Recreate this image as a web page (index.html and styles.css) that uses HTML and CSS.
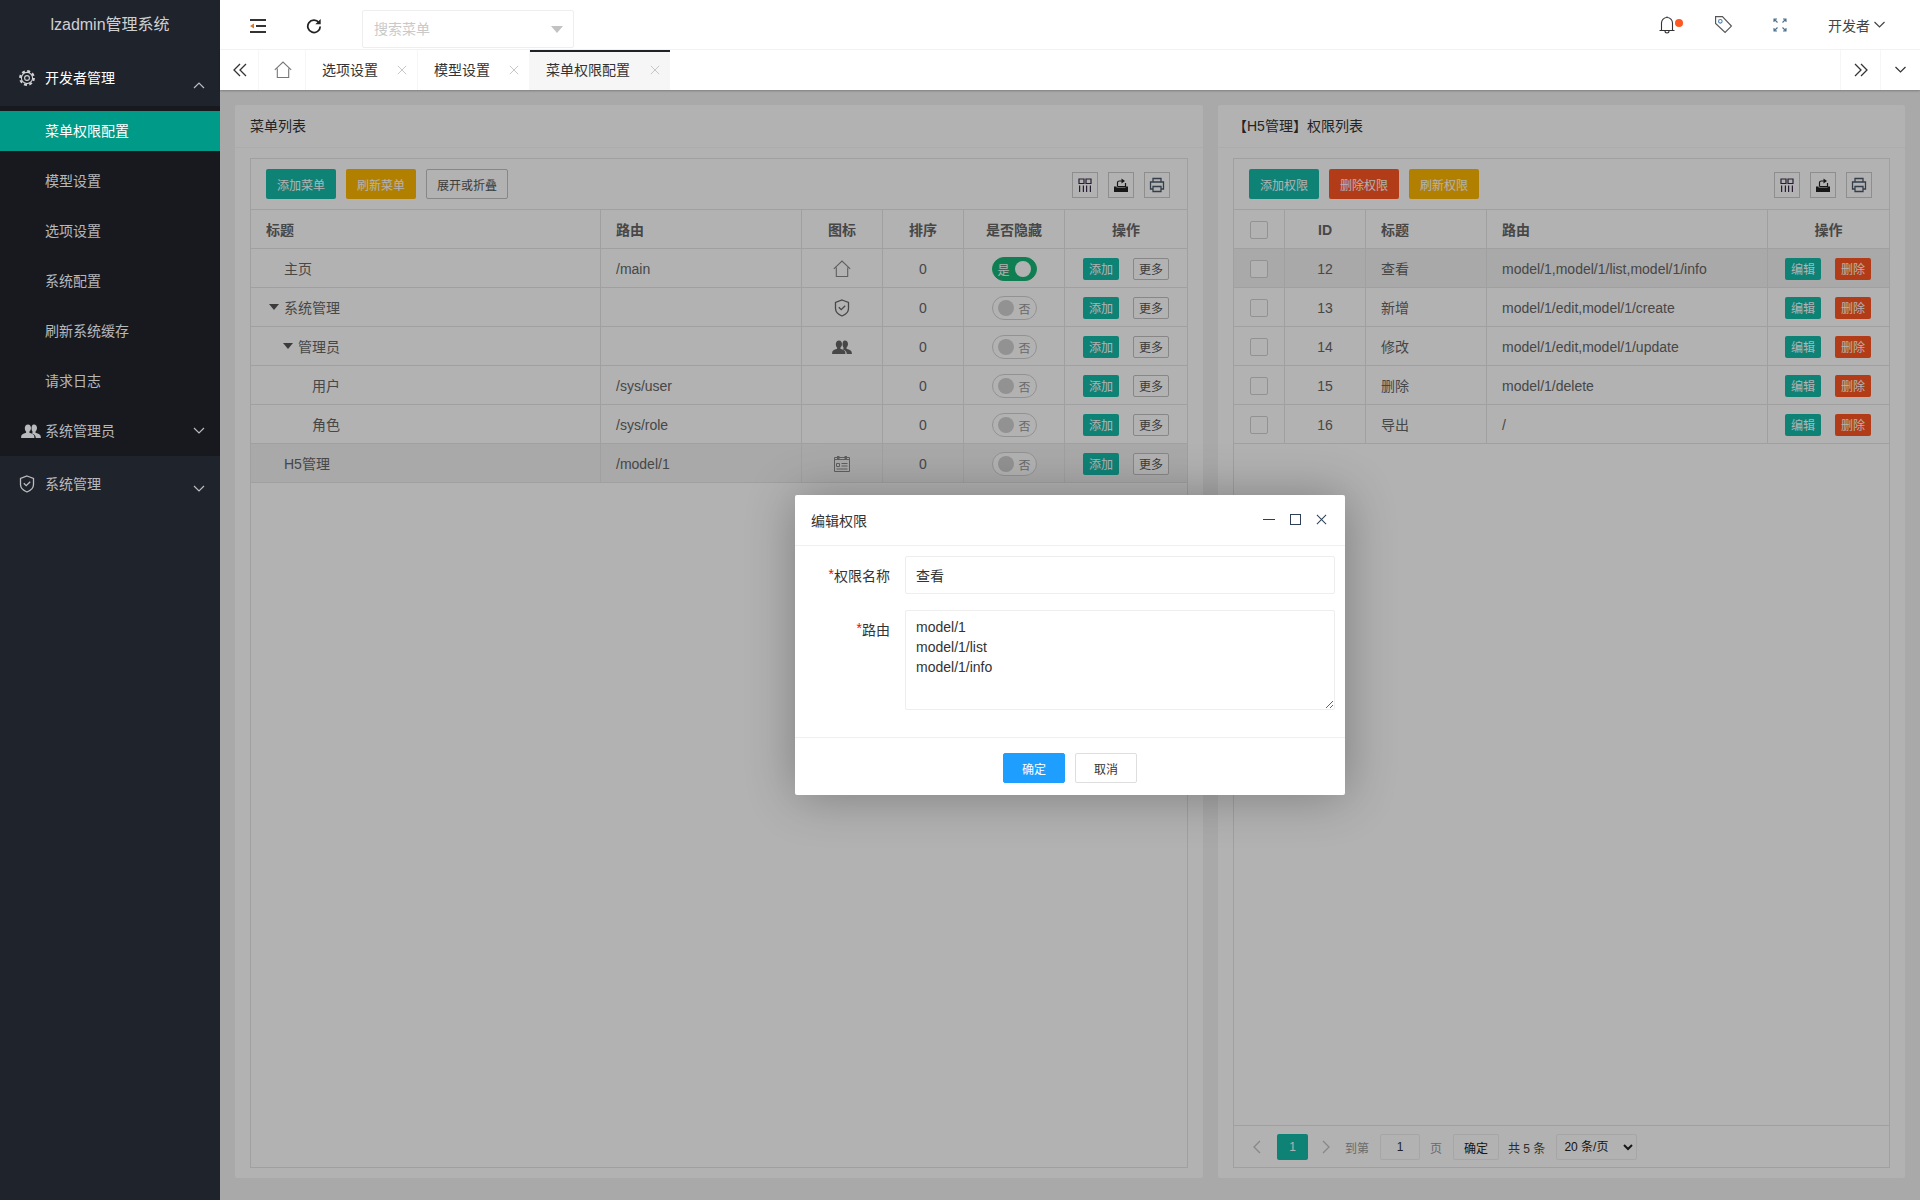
FILE: index.html
```html
<!DOCTYPE html>
<html>
<head>
  <meta charset="utf-8">
  <title>lzadmin管理系统</title>
  <link rel="stylesheet" href="styles.css">
</head>
<body>
  <svg class="sprite" xmlns="http://www.w3.org/2000/svg">
    <symbol id="i-gear" viewBox="0 0 18 18">
      <circle cx="9" cy="9" r="2.4" fill="none" stroke="currentColor" stroke-width="1.100"/>
      <circle cx="9" cy="9" r="5.600" fill="none" stroke="currentColor" stroke-width="1.100"/>
      <circle cx="9" cy="9" r="6.900" fill="none" stroke="currentColor" stroke-width="2" stroke-dasharray="3 2.420"/>
    </symbol>
    <symbol id="i-users" viewBox="0 0 20 16">
      <path fill="currentColor" d="M7 1.500c1.900 0 3 1.600 3 3.500 0 1.500-.7 2.900-1.600 3.500v1.200c1.800.6 4 1.500 4.600 2.600.3.600.4 1.700.4 2.700H.1c0-1 .1-2.100.4-2.700.6-1.100 2.800-2 4.600-2.600V8.500C4.200 7.900 3.800 6.500 3.800 5c0-1.900 1.300-3.500 3.200-3.500z"/>
      <path fill="currentColor" d="M13 1.500c1.900 0 3 1.600 3 3.500 0 1.500-.7 2.900-1.500 3.500v1.200c1.800.6 4.200 1.500 4.800 2.600.3.600.6 1.700.6 2.700h-5.100c0-1.800-.8-3.200-4.100-4.700.4-.3.800-.5.800-.9V8.500c-.6-.6-1-2-1-3.500 0-1.900 1.100-3.500 2-3.500z"/>
    </symbol>
    <symbol id="i-shield" viewBox="0 0 16 18">
      <path fill="none" stroke="currentColor" stroke-width="1.300" d="M8 1l6.500 2.400v6.200c0 3.400-3 6-6.500 7.400-3.500-1.400-6.500-4-6.500-7.400V3.400z"/>
      <path fill="none" stroke="currentColor" stroke-width="1.300" d="M4.800 8.300l2.400 2.400 4-4"/>
    </symbol>
    <symbol id="i-home" viewBox="0 0 18 18">
      <path fill="none" stroke="currentColor" stroke-width="1.100" d="M.8 8.800L9 1l8.200 7.800M3.300 7.500v9h11.400v-9"/>
    </symbol>
    <symbol id="i-cal" viewBox="0 0 18 18">
      <path fill="none" stroke="currentColor" d="M1.500 2.500h15v14h-15z"/>
      <path fill="currentColor" d="M4 1h2.500v3H4zM11.500 1H14v3h-2.500zM1.500 4h15v1h-15z"/>
      <path fill="none" stroke="currentColor" d="M3.500 8.500h3v3h-3zM8.500 8.500h6M8.500 11h6M3.500 14h11"/>
    </symbol>
    <symbol id="i-cols" viewBox="0 0 16 16">
      <path fill="none" stroke="currentColor" stroke-width="1.200" d="M2 2h5v4.500H2zM9 2h5v4.500H9zM2.600 8.500V15M6.400 8.500V15M9.600 8.500V15M13.400 8.500V15"/>
    </symbol>
    <symbol id="i-export" viewBox="0 0 16 16">
      <path fill="currentColor" d="M1 9.500h2.500v1h9v-1H15v5.500H1z"/>
      <path fill="none" stroke="currentColor" stroke-width="1.200" d="M4.500 9.500V5.500c0-1 .8-1.500 2-1.500h3M4.500 9.500h8V6"/>
      <path fill="currentColor" d="M8.500 1.500L12 4l-3.500 2.500z"/>
    </symbol>
    <symbol id="i-print" viewBox="0 0 16 16">
      <path fill="none" stroke="currentColor" stroke-width="1.300" d="M4 5V1.500h8V5M4 12H1.500V5h13v7H12M4 9.500h8v5H4z"/>
    </symbol>
    <symbol id="i-down" viewBox="0 0 12 8">
      <path fill="none" stroke="currentColor" stroke-width="1.200" d="M1 1l5 5 5-5"/>
    </symbol>
    <symbol id="i-up" viewBox="0 0 12 8">
      <path fill="none" stroke="currentColor" stroke-width="1.200" d="M1 7l5-5 5 5"/>
    </symbol>
    <symbol id="i-left" viewBox="0 0 8 14">
      <path fill="none" stroke="currentColor" stroke-width="1.300" d="M7 1L1 7l6 6"/>
    </symbol>
    <symbol id="i-right" viewBox="0 0 8 14">
      <path fill="none" stroke="currentColor" stroke-width="1.300" d="M1 1l6 6-6 6"/>
    </symbol>
    <symbol id="i-x" viewBox="0 0 12 12">
      <path fill="none" stroke="currentColor" stroke-width="1.100" d="M1 1l10 10M11 1L1 11"/>
    </symbol>
  </svg>

  <div class="app">
    <!-- 左侧菜单 -->
    <aside class="side">
      <div class="logo">lzadmin管理系统</div>
      <div class="nav-top nav-open">
        <svg class="nav-icon icon-gear"><use href="#i-gear"/></svg>
        <span>开发者管理</span>
        <svg class="nav-arrow arrow-open"><use href="#i-up"/></svg>
      </div>
      <ul class="nav-child">
        <li><a class="active">菜单权限配置</a></li>
        <li><a>模型设置</a></li>
        <li><a>选项设置</a></li>
        <li><a>系统配置</a></li>
        <li><a>刷新系统缓存</a></li>
        <li><a>请求日志</a></li>
      </ul>
      <div class="nav-top nav-dark">
        <svg class="nav-icon icon-users"><use href="#i-users"/></svg>
        <span>系统管理员</span>
        <svg class="nav-arrow"><use href="#i-down"/></svg>
      </div>
      <div class="nav-top">
        <svg class="nav-icon"><use href="#i-shield"/></svg>
        <span>系统管理</span>
        <svg class="nav-arrow arrow-low"><use href="#i-down"/></svg>
      </div>
    </aside>

    <div class="main">
      <!-- 顶部 -->
      <header class="head">
        <svg class="head-btn btn-fold" viewBox="0 0 16 14">
          <path fill="none" stroke="#333" stroke-width="1.800" d="M0 1h16M6 7h10M0 13h16"/>
          <path fill="#d9761c" d="M0 7l4-2.500v5z"/>
        </svg>
        <svg class="head-btn btn-refresh" viewBox="0 0 18 18">
          <path fill="none" stroke="#222" stroke-width="2" d="M14.500 5A7 7 0 1 0 16 9.500"/>
          <path fill="#222" d="M16.500 1v6h-6z"/>
        </svg>
        <div class="search">
          <span>搜索菜单</span>
          <i class="search-caret"></i>
        </div>
        <div class="head-right">
          <div class="bell">
            <svg viewBox="0 0 16 18" width="16" height="18">
              <path fill="none" stroke="#333" stroke-width="1.100" d="M.5 14.500h15M2.500 14.500V7a5.500 5.500 0 0 1 11 0v7.500M6 15c0 2.600 4 2.600 4 0M8 .5v1"/>
            </svg>
            <i class="bell-dot"></i>
          </div>
          <svg class="tag" viewBox="0 0 18 18">
            <path fill="none" stroke="#555" stroke-width="1.100" d="M1.500 1.500h6.500l8.500 9-6 6-9-8.500z"/>
            <circle cx="6" cy="6" r="1.700" fill="none" stroke="#4a7fb5"/>
          </svg>
          <svg class="expand" viewBox="0 0 14 14">
            <path fill="none" stroke="#4d6f8a" stroke-width="1.100" d="M1 4V1h3M1 1l3.500 3.500M13 4V1h-3M13 1L9.500 4.500M1 10v3h3M1 13l3.500-3.500M13 10v3h-3M13 13L9.500 9.500"/>
          </svg>
          <div class="user">开发者<svg class="user-arrow"><use href="#i-down"/></svg></div>
        </div>
      </header>

      <!-- 标签栏 -->
      <nav class="tabs">
        <div class="tab-tool">
          <svg class="tab-dbl" viewBox="0 0 14 14"><path fill="none" stroke="#333" stroke-width="1.300" d="M7 1L1 7l6 6M13 1L7 7l6 6"/></svg>
        </div>
        <div class="tab-home"><svg class="home-icon"><use href="#i-home"/></svg></div>
        <div class="tab">选项设置<svg class="tab-x"><use href="#i-x"/></svg></div>
        <div class="tab">模型设置<svg class="tab-x"><use href="#i-x"/></svg></div>
        <div class="tab tab-on">菜单权限配置<svg class="tab-x"><use href="#i-x"/></svg></div>
        <div class="tab-space"></div>
        <div class="tab-tool tool-right">
          <svg class="tab-dbl" viewBox="0 0 14 14"><path fill="none" stroke="#333" stroke-width="1.300" d="M1 1l6 6-6 6M7 1l6 6-6 6"/></svg>
        </div>
        <div class="tab-tool tool-right">
          <svg class="tab-more"><use href="#i-down"/></svg>
        </div>
      </nav>

      <!-- 内容区 -->
      <div class="body">
        <div class="cards">
          <section class="card">
            <div class="card-head">菜单列表</div>
            <div class="card-body">
              <div class="box">
                <div class="toolbar">
                  <button class="btn btn-teal">添加菜单</button>
                  <button class="btn btn-amber">刷新菜单</button>
                  <button class="btn btn-plain">展开或折叠</button>
                  <div class="tools">
                    <span class="tool tool-cols"><svg><use href="#i-cols"/></svg></span>
                    <span class="tool tool-dark"><svg><use href="#i-export"/></svg></span>
                    <span class="tool tool-print"><svg><use href="#i-print"/></svg></span>
                  </div>
                </div>
                <table class="grid">
                  <colgroup>
                    <col class="w349"><col class="w201"><col class="w81"><col class="w81"><col class="w101"><col>
                  </colgroup>
                  <tr><th class="left">标题</th><th class="left">路由</th><th>图标</th><th>排序</th><th>是否隐藏</th><th>操作</th></tr>
                  <tr>
                    <td class="left cn"><span class="tree t1">主页</span></td><td class="left">/main</td>
                    <td><svg class="cell-icon icon-soft"><use href="#i-home"/></svg></td><td>0</td>
                    <td><span class="sw sw-on"><em>是</em><i></i></span></td>
                    <td class="ops"><button class="mini mini-teal">添加</button><button class="mini mini-plain">更多</button></td>
                  </tr>
                  <tr>
                    <td class="left cn"><span class="tree t1"><i class="caret"></i>系统管理</span></td><td class="left"></td>
                    <td><svg class="cell-icon"><use href="#i-shield"/></svg></td><td>0</td>
                    <td><span class="sw"><i></i><em>否</em></span></td>
                    <td class="ops"><button class="mini mini-teal">添加</button><button class="mini mini-plain">更多</button></td>
                  </tr>
                  <tr>
                    <td class="left cn"><span class="tree t2"><i class="caret"></i>管理员</span></td><td class="left"></td>
                    <td><svg class="cell-icon icon-wide"><use href="#i-users"/></svg></td><td>0</td>
                    <td><span class="sw"><i></i><em>否</em></span></td>
                    <td class="ops"><button class="mini mini-teal">添加</button><button class="mini mini-plain">更多</button></td>
                  </tr>
                  <tr>
                    <td class="left cn"><span class="tree t3">用户</span></td><td class="left">/sys/user</td>
                    <td></td><td>0</td>
                    <td><span class="sw"><i></i><em>否</em></span></td>
                    <td class="ops"><button class="mini mini-teal">添加</button><button class="mini mini-plain">更多</button></td>
                  </tr>
                  <tr>
                    <td class="left cn"><span class="tree t3">角色</span></td><td class="left">/sys/role</td>
                    <td></td><td>0</td>
                    <td><span class="sw"><i></i><em>否</em></span></td>
                    <td class="ops"><button class="mini mini-teal">添加</button><button class="mini mini-plain">更多</button></td>
                  </tr>
                  <tr class="picked">
                    <td class="left cn"><span class="tree t1">H5管理</span></td><td class="left">/model/1</td>
                    <td><svg class="cell-icon icon-soft"><use href="#i-cal"/></svg></td><td>0</td>
                    <td><span class="sw"><i></i><em>否</em></span></td>
                    <td class="ops"><button class="mini mini-teal">添加</button><button class="mini mini-plain">更多</button></td>
                  </tr>
                </table>
              </div>
            </div>
          </section>

          <section class="card">
            <div class="card-head">【H5管理】权限列表</div>
            <div class="card-body">
              <div class="box">
                <div class="toolbar">
                  <button class="btn btn-teal">添加权限</button>
                  <button class="btn btn-red">删除权限</button>
                  <button class="btn btn-amber">刷新权限</button>
                  <div class="tools">
                    <span class="tool tool-cols"><svg><use href="#i-cols"/></svg></span>
                    <span class="tool tool-dark"><svg><use href="#i-export"/></svg></span>
                    <span class="tool tool-print"><svg><use href="#i-print"/></svg></span>
                  </div>
                </div>
                <table class="grid">
                  <colgroup>
                    <col class="w50"><col class="w81"><col class="w121"><col class="w281"><col>
                  </colgroup>
                  <tr><th class="num"><i class="check"></i></th><th class="num">ID</th><th class="left">标题</th><th class="left">路由</th><th>操作</th></tr>
                  <tr class="picked">
                    <td><i class="check"></i></td><td>12</td><td class="left cn">查看</td><td class="left">model/1,model/1/list,model/1/info</td>
                    <td class="ops ops-right"><button class="mini mini-teal">编辑</button><button class="mini mini-red">删除</button></td>
                  </tr>
                  <tr>
                    <td><i class="check"></i></td><td>13</td><td class="left cn">新增</td><td class="left">model/1/edit,model/1/create</td>
                    <td class="ops ops-right"><button class="mini mini-teal">编辑</button><button class="mini mini-red">删除</button></td>
                  </tr>
                  <tr>
                    <td><i class="check"></i></td><td>14</td><td class="left cn">修改</td><td class="left">model/1/edit,model/1/update</td>
                    <td class="ops ops-right"><button class="mini mini-teal">编辑</button><button class="mini mini-red">删除</button></td>
                  </tr>
                  <tr>
                    <td><i class="check"></i></td><td>15</td><td class="left cn">删除</td><td class="left">model/1/delete</td>
                    <td class="ops ops-right"><button class="mini mini-teal">编辑</button><button class="mini mini-red">删除</button></td>
                  </tr>
                  <tr>
                    <td><i class="check"></i></td><td>16</td><td class="left cn">导出</td><td class="left">/</td>
                    <td class="ops ops-right"><button class="mini mini-teal">编辑</button><button class="mini mini-red">删除</button></td>
                  </tr>
                </table>
                <div class="pager">
                  <svg class="pg-arrow"><use href="#i-left"/></svg>
                  <span class="pg-cur">1</span>
                  <svg class="pg-arrow"><use href="#i-right"/></svg>
                  <span class="pg-to">到第</span>
                  <input class="pg-input" value="1">
                  <span class="pg-page">页</span>
                  <button class="pg-ok">确定</button>
                  <span class="pg-total">共 5 条</span>
                  <select class="pg-size"><option>20 条/页</option></select>
                </div>
              </div>
            </div>
          </section>
        </div>

        <!-- 遮罩和弹窗 -->
        <div class="shade">
          <div class="dialog">
            <div class="dlg-head">
              <span>编辑权限</span>
              <div class="dlg-tools">
                <i class="dlg-min"></i>
                <i class="dlg-max"></i>
                <svg class="dlg-close"><use href="#i-x"/></svg>
              </div>
            </div>
            <div class="dlg-body">
              <div class="field">
                <label><b>*</b>权限名称</label>
                <input class="control" value="查看">
              </div>
              <div class="field">
                <label><b>*</b>路由</label>
                <textarea class="control area">model/1
model/1/list
model/1/info</textarea>
              </div>
            </div>
            <div class="dlg-foot">
              <button class="dlg-btn dlg-ok">确定</button>
              <button class="dlg-btn">取消</button>
            </div>
          </div>
        </div>
      </div>
    </div>
  </div>
</body>
</html>
```

FILE: styles.css
```css
/* 基础 */
* {
  box-sizing: border-box;
}

body {
  margin: 0;
  font-family: "Liberation Sans", "Noto Sans CJK SC", sans-serif;
  font-size: 14px;
  color: #666;
  background-color: #f2f2f2;
}

ul {
  list-style: none;
  margin: 0;
  padding: 0;
}

button, input, select, textarea {
  font-family: inherit;
}

.sprite {
  display: none;
}

.app {
  display: flex;
  height: 100vh;
  overflow: hidden;
}

/* 左侧菜单 */
.side {
  width: 220px;
  flex: none;
  background-color: #1f232c;
  color: rgba(255, 255, 255, 0.7);
}

.logo {
  height: 50px;
  line-height: 50px;
  text-align: center;
  font-size: 16px;
  color: rgba(255, 255, 255, 0.8);
}

.nav-top {
  position: relative;
  display: flex;
  align-items: center;
  height: 56px;
  padding-left: 45px;
  padding-bottom: 2px;
}

.nav-open {
  color: #fff;
}

.nav-dark {
  height: 50px;
  background-color: #17191f;
}

.nav-icon {
  position: absolute;
  left: 18px;
  top: 50%;
  width: 18px;
  height: 18px;
  margin-top: -9px;
}

.icon-gear {
  color: rgba(255, 255, 255, 0.8);
}

.icon-users {
  left: 21px;
  width: 20px;
}

.nav-arrow {
  position: absolute;
  left: 193px;
  top: 50%;
  width: 12px;
  height: 8px;
  margin-top: -4px;
  color: rgba(255, 255, 255, 0.7);
}

.arrow-open {
  margin-top: 3px;
}

.arrow-low {
  margin-top: 1px;
}

.nav-child {
  background-color: #17191f;
}

.nav-child li {
  height: 50px;
  padding: 5px 0;
}

.nav-child a {
  display: block;
  height: 40px;
  line-height: 40px;
  padding-left: 45px;
}

.nav-child a.active {
  background-color: #009a88;
  color: #fff;
}

.main {
  flex: 1;
  display: flex;
  flex-direction: column;
  min-width: 0;
}

/* 顶部 */
.head {
  position: relative;
  height: 50px;
  flex: none;
  display: flex;
  align-items: center;
  padding-left: 30px;
  background-color: #fff;
  border-bottom: 1px solid #f6f6f6;
}

.head-btn {
  flex: none;
  margin-top: 2px;
}

.btn-fold {
  width: 16px;
  height: 14px;
}

.btn-refresh {
  width: 16px;
  height: 16px;
  margin-left: 40px;
}

.search {
  position: relative;
  width: 212px;
  height: 38px;
  margin-left: 40px;
  margin-top: 8px;
  padding-left: 11px;
  line-height: 36px;
  color: #c9c9c9;
  border: 1px solid #eee;
  border-radius: 2px;
}

.search-caret {
  position: absolute;
  right: 10px;
  top: 15px;
  border: 6px solid transparent;
  border-top: 7px solid #c2c2c2;
  border-bottom: 0;
}

.head-right {
  margin-left: auto;
  display: flex;
  align-items: center;
  color: #444;
}

.bell {
  position: relative;
  width: 16px;
  height: 18px;
}

.bell-dot {
  position: absolute;
  left: 16px;
  top: 3px;
  width: 8px;
  height: 8px;
  border-radius: 50%;
  background-color: #ff5722;
}

.tag {
  width: 19px;
  height: 19px;
  margin-left: 39px;
}

.expand {
  width: 14px;
  height: 14px;
  margin-left: 40px;
}

.user {
  display: flex;
  align-items: center;
  margin-left: 41px;
  margin-right: 34px;
}

.user-arrow {
  width: 13px;
  height: 8px;
  margin-left: 3px;
}

/* 标签栏 */
.tabs {
  position: relative;
  z-index: 2;
  height: 40px;
  flex: none;
  display: flex;
  background-color: #fff;
  box-shadow: 0 1px 2px rgba(0, 0, 0, 0.25);
}

.tab-tool {
  width: 39px;
  padding-left: 1px;
  display: flex;
  align-items: center;
  justify-content: center;
  border-right: 1px solid #f6f6f6;
}

.tool-right {
  width: 40px;
  padding-left: 0;
  border-right: 0;
  border-left: 1px solid #f6f6f6;
}

.tab-dbl {
  width: 14px;
  height: 14px;
}

.tab-more {
  width: 13px;
  height: 8px;
  color: #333;
}

.tab-home {
  width: 47px;
  padding-left: 1px;
  display: flex;
  align-items: center;
  justify-content: center;
  border-right: 1px solid #f6f6f6;
}

.home-icon {
  width: 18px;
  height: 18px;
  color: #777;
}

.tab {
  position: relative;
  width: 112px;
  padding-left: 16px;
  line-height: 40px;
  color: #333;
  border-right: 1px solid #f6f6f6;
}

.tab-on {
  width: 140px;
  background-color: #f6f6f6;
  line-height: 36px;
  border-top: 2px solid #20222a;
  border-right: 0;
}

.tab-x {
  position: absolute;
  right: 10px;
  top: 15px;
  width: 10px;
  height: 10px;
  color: #c2c2c2;
}

.tab-on .tab-x {
  top: 13px;
}

.tab-space {
  flex: 1;
}

/* 内容区 */
.body {
  position: relative;
  flex: 1;
  min-height: 0;
}

.cards {
  height: 100%;
  display: grid;
  grid-template-columns: 968px 1fr;
  gap: 15px;
  padding: 15px 15px 22px;
}

.card {
  display: flex;
  flex-direction: column;
  min-height: 0;
  background-color: #fff;
  border-radius: 2px;
}

.card-head {
  height: 43px;
  flex: none;
  padding-left: 15px;
  line-height: 42px;
  color: #333;
  border-bottom: 1px solid #f6f6f6;
}

.card-body {
  flex: 1;
  display: flex;
  min-height: 0;
  padding: 10px 15px;
}

.box {
  flex: 1;
  min-width: 0;
  display: flex;
  flex-direction: column;
  border: 1px solid #e6e6e6;
}

.toolbar {
  position: relative;
  height: 51px;
  flex: none;
  display: flex;
  gap: 10px;
  padding: 10px 15px;
  border-bottom: 1px solid #e6e6e6;
}

.btn {
  height: 30px;
  padding: 0 10px;
  font-size: 12px;
  color: #fff;
  border: 1px solid transparent;
  border-radius: 2px;
}

.btn-teal {
  background-color: #16baaa;
}

.btn-amber {
  background-color: #ffb800;
}

.btn-red {
  background-color: #ff5722;
}

.btn-plain {
  background-color: #fff;
  color: #555;
  border-color: #c2c2c2;
}

.tools {
  margin-left: auto;
  display: flex;
  gap: 10px;
  padding-top: 3px;
  margin-right: 2px;
}

.tool {
  width: 26px;
  height: 26px;
  display: flex;
  align-items: center;
  justify-content: center;
  border: 1px solid #ccc;
}

.tool svg {
  width: 16px;
  height: 16px;
}

.tool-cols {
  color: #3a2a4a;
}

.tool-dark {
  color: #222;
}

.tool-print {
  color: #4a5a6a;
}

/* 表格 */
.grid {
  width: 100%;
  table-layout: fixed;
  border-collapse: separate;
  border-spacing: 0;
}

.w50 { width: 50px; }
.w81 { width: 81px; }
.w101 { width: 101px; }
.w121 { width: 121px; }
.w201 { width: 201px; }
.w281 { width: 281px; }
.w349 { width: 349px; }

.grid th, .grid td {
  height: 39px;
  padding: 0 15px;
  text-align: center;
  border-bottom: 1px solid #e6e6e6;
  border-left: 1px solid #e6e6e6;
}

.grid td, .grid th.num {
  padding-top: 1px;
}

.grid td.cn {
  padding-top: 0;
}

.grid td.ops-right {
  padding-right: 16px;
}

.grid th:first-child, .grid td:first-child {
  border-left: 0;
}

.grid .left {
  text-align: left;
}

.grid th {
  font-weight: bold;
}

.picked td {
  background-color: #f2f2f2;
}

.tree {
  display: block;
  position: relative;
}

.t1 { padding-left: 18px; }
.t2 { padding-left: 32px; }
.t3 { padding-left: 46px; }

.caret {
  position: absolute;
  top: 7px;
  margin-left: -15px;
  border: 5px solid transparent;
  border-top: 6px solid #555;
  border-bottom: 0;
}

.cell-icon {
  display: block;
  width: 18px;
  height: 18px;
  margin: 0 auto;
  color: #666;
}

.icon-soft {
  color: #888;
}

.icon-wide {
  width: 20px;
}

.ops {
  font-size: 0;
}

.mini {
  width: 36px;
  height: 22px;
  padding: 0;
  font-size: 12px;
  vertical-align: middle;
  border-radius: 2px;
  border: 1px solid transparent;
  color: #fff;
}

.mini + .mini {
  margin-left: 14px;
}

.mini-teal {
  background-color: #16baaa;
}

.mini-red {
  background-color: #ff5722;
}

.mini-plain {
  background-color: #fff;
  color: #555;
  border-color: #c2c2c2;
}

.check {
  display: block;
  width: 18px;
  height: 18px;
  margin: 0 auto;
  border: 1px solid #d2d2d2;
  border-radius: 2px;
  background-color: #fff;
}

.sw {
  display: inline-flex;
  align-items: center;
  justify-content: space-between;
  width: 45px;
  height: 24px;
  padding: 0 5px;
  margin-top: 1px;
  vertical-align: middle;
  font-size: 12px;
  color: #999;
  background-color: #fff;
  border: 1px solid #d2d2d2;
  border-radius: 20px;
}

.sw em {
  font-style: normal;
}

.sw i {
  width: 16px;
  height: 16px;
  border-radius: 50%;
  background-color: #d2d2d2;
}

.sw-on {
  color: #fff;
  background-color: #16b777;
  border-color: #16b777;
}

.sw-on i {
  background-color: #fff;
}

/* 分页 */
.pager {
  margin-top: auto;
  height: 42px;
  flex: none;
  display: flex;
  align-items: center;
  padding-left: 19px;
  padding-top: 1px;
  font-size: 12px;
  color: #999;
  border-top: 1px solid #e6e6e6;
}

.pg-arrow {
  width: 8px;
  height: 14px;
  color: #c2c2c2;
}

.pg-cur {
  width: 31px;
  height: 26px;
  margin: 0 14px 0 16px;
  line-height: 26px;
  text-align: center;
  color: #fff;
  background-color: #16baaa;
  border-radius: 2px;
}

.pg-to {
  margin-left: 15px;
}

.pg-input {
  width: 40px;
  height: 26px;
  margin-left: 11px;
  padding: 0;
  font-size: 12px;
  text-align: center;
  color: #333;
  background-color: #fff;
  border: 1px solid #eee;
  border-radius: 2px;
}

.pg-page {
  margin-left: 10px;
}

.pg-ok {
  width: 46px;
  height: 26px;
  margin-left: 11px;
  padding: 0;
  font-size: 12px;
  color: #222;
  background-color: #fff;
  border: 1px solid #eee;
  border-radius: 2px;
}

.pg-total {
  margin-left: 9px;
  color: #444;
}

.pg-size {
  width: 81px;
  height: 26px;
  margin-left: 11px;
  padding-left: 3px;
  font-size: 12px;
  color: #222;
  background-color: #fff;
  border: 1px solid #eee;
  border-radius: 2px;
}

/* 遮罩和弹窗 */
.shade {
  position: absolute;
  inset: 0;
  z-index: 1;
  display: flex;
  align-items: center;
  justify-content: center;
  background-color: rgba(0, 0, 0, 0.3);
}

.dialog {
  width: 550px;
  height: 300px;
  display: flex;
  flex-direction: column;
  background-color: #fff;
  border-radius: 2px;
  box-shadow: 1px 1px 50px rgba(0, 0, 0, 0.3);
}

.dlg-head {
  height: 51px;
  flex: none;
  display: flex;
  align-items: center;
  justify-content: space-between;
  padding-left: 16px;
  padding-bottom: 1px;
  color: #333;
  border-bottom: 1px solid #f0f0f0;
}

.dlg-tools {
  display: flex;
  align-items: center;
  margin-right: 18px;
}

.dlg-min {
  width: 12px;
  height: 1px;
  background-color: #2f4056;
}

.dlg-max {
  width: 11px;
  height: 11px;
  margin-left: 15px;
  border: 1px solid #2f4056;
}

.dlg-close {
  width: 11px;
  height: 11px;
  margin-left: 15px;
  color: #2f4056;
}

.dlg-body {
  flex: 1;
  padding-top: 10px;
  padding-right: 10px;
}

.field {
  display: flex;
  margin-bottom: 16px;
}

.field label {
  width: 95px;
  flex: none;
  padding-top: 9px;
  text-align: right;
  color: #333;
}

.field label b {
  font-weight: normal;
  color: #f00;
  vertical-align: 2px;
}

.control {
  display: block;
  flex: 1;
  min-width: 0;
  height: 38px;
  margin-left: 15px;
  padding: 0 10px;
  font-size: 14px;
  color: #333;
  background-color: #fff;
  border: 1px solid #eee;
  border-radius: 2px;
  outline: none;
}

.area {
  height: 100px;
  padding: 6px 10px;
  line-height: 20px;
}

.dlg-foot {
  height: 58px;
  flex: none;
  display: flex;
  justify-content: center;
  gap: 10px;
  padding-top: 15px;
  border-top: 1px solid #f0f0f0;
}

.dlg-btn {
  width: 62px;
  height: 30px;
  padding: 0;
  font-size: 12px;
  color: #333;
  background-color: #fff;
  border: 1px solid #dedede;
  border-radius: 2px;
}

.dlg-ok {
  color: #fff;
  background-color: #1e9fff;
  border-color: #1e9fff;
}
```
